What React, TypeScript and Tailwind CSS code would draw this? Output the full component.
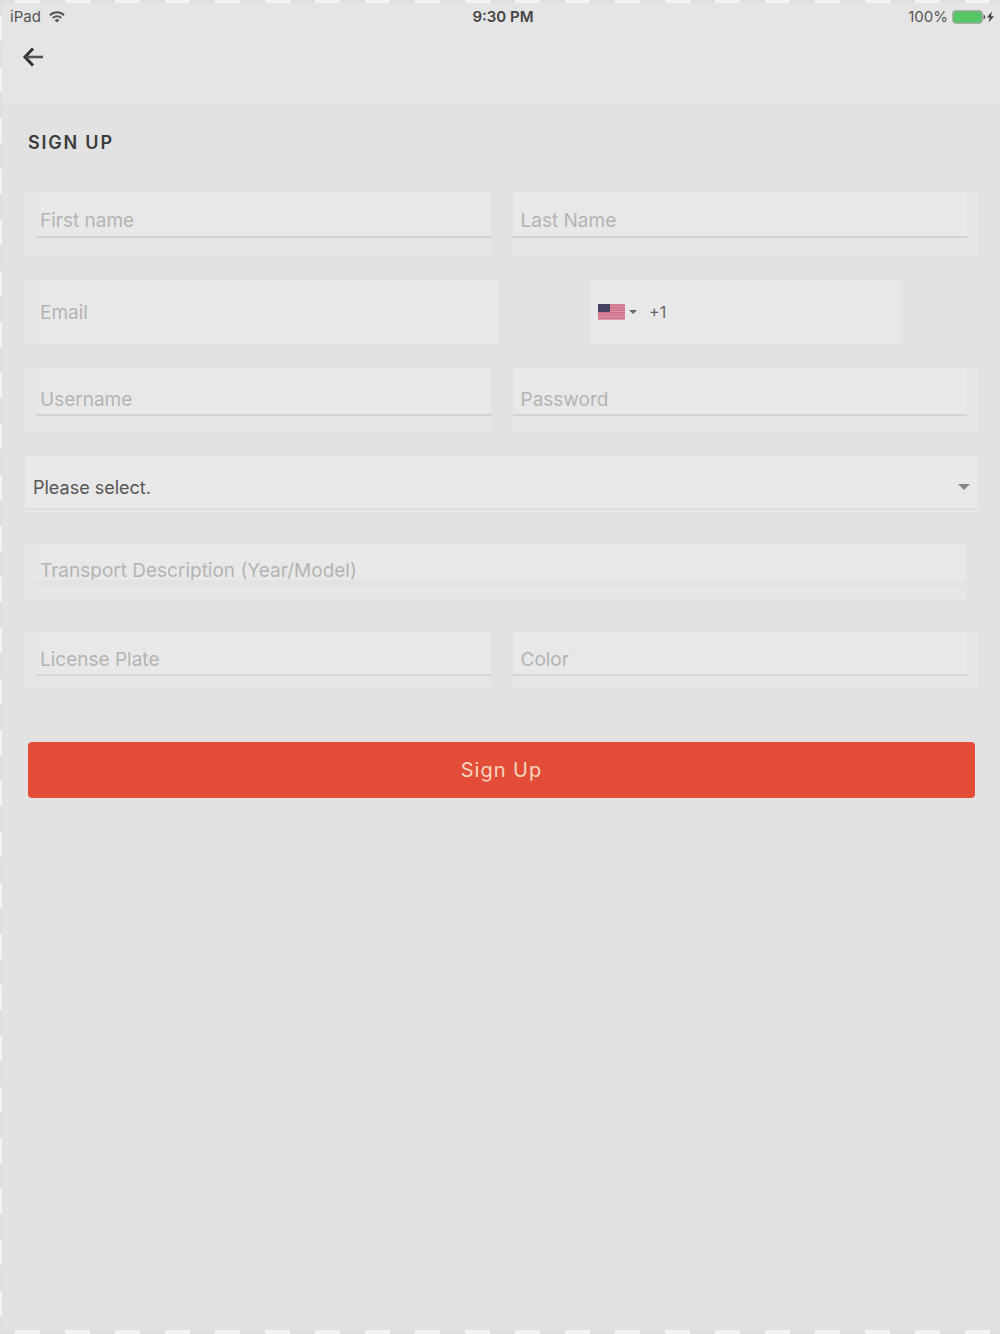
import { useState } from "react";
import clsx from "clsx";

type FieldProps = {
  label: string;
  type?: string;
  className?: string;
  inputClassName?: string;
};

function Field({ label, type = "text", className, inputClassName }: FieldProps) {
  return (
    <div className={clsx("bg-[#e6e6e6]", className)}>
      <input
        type={type}
        aria-label={label}
        placeholder={label}
        className={clsx(
          "block w-full rounded-none bg-[#e8e8e8] text-[19px] text-[#555] outline-none placeholder:text-[#b4b4b4]",
          inputClassName
        )}
      />
    </div>
  );
}

function StatusBar() {
  return (
    <div className="grid h-7 grid-cols-3 items-center pl-2 pr-1 text-[15px] leading-5 text-[#555]">
      <div className="flex items-center gap-2">
        <span>iPad</span>
        <svg width="16" height="12" viewBox="0 0 16 12" fill="none" stroke="#555" strokeWidth="2">
          <path d="M1 4.2a10 10 0 0 1 14 0" />
          <path d="M3.8 7a6 6 0 0 1 8.4 0" />
          <path d="M8 11.5 5.7 9.2a3.3 3.3 0 0 1 4.6 0z" fill="#555" stroke="none" />
        </svg>
      </div>
      <span className="text-center font-semibold text-[#444]">9:30 PM</span>
      <div className="flex items-center justify-end gap-1">
        <span>100%</span>
        <svg width="44" height="14" viewBox="0 0 44 14">
          <rect x="1" y="1" width="29" height="12" rx="3" fill="#57c667" stroke="#8fa893" strokeWidth="1.5" />
          <path d="M31.5 4.500v5a2.600 2.600 0 0 0 0-5z" fill="#555" />
          <path d="M40 1.500 34.800 7.600h3L36.600 12.500 42 6.200h-3z" fill="#444" />
        </svg>
      </div>
    </div>
  );
}

function UsFlag() {
  return (
    <svg width="27" height="16" viewBox="0 0 27 16" className="shrink-0">
      <rect width="27" height="16" fill="#d99aaa" />
      <path d="M0 1.200h27M0 3.700h27M0 6.200h27M0 8.700h27M0 11.200h27M0 13.700h27" stroke="#d2708a" strokeWidth="1.4" />
      <rect width="12" height="8" fill="#45425f" />
    </svg>
  );
}

function Caret({ className }: { className?: string }) {
  return (
    <svg viewBox="0 0 12 6" className={className} fill="currentColor">
      <path d="M0 0h12L6 6z" />
    </svg>
  );
}

export default function App() {
  const [phone, setPhone] = useState("+1");

  return (
    <div className="flex min-h-screen flex-col bg-[conic-gradient(#f3f3f3_25%,#dfdfdf_0_50%,#f3f3f3_0_75%,#dfdfdf_0)] bg-[length:50px_51px] bg-[position:15px_16px] pt-[3px] pb-1 pl-[2px] font-[Inter,'Liberation_Sans',sans-serif]">
      <div className="flex grow flex-col bg-[#e2e2e2]">
        <header className="h-[100px] bg-[#e5e5e5]">
          <StatusBar />
          <button type="button" aria-label="Back" className="ml-5 mt-4 block">
            <svg width="22" height="20" viewBox="0 0 22 20" fill="none" stroke="#333">
              <path d="M11 1.500 3 10l8 8.500" strokeWidth="3" />
              <path d="M4 10h17" strokeWidth="2.600" stroke="#555" />
            </svg>
          </button>
        </header>

        <main className="pl-[23px] pr-[22px] pt-6">
          <h1 className="pl-[3px] text-lg leading-8 font-semibold tracking-widest text-[#3c3c3c]">SIGN UP</h1>

          <form className="mt-[33px]" onSubmit={(e) => e.preventDefault()}>
            <div className="grid grid-cols-2 gap-x-[22px] gap-y-6">
              <Field
                label="First name"
                className="h-16 pl-[11px]"
                inputClassName="h-[46px] border-b-2 border-[#d2d2d2] px-1 pt-3"
              />
              <Field
                label="Last Name"
                className="h-16 pr-[11px]"
                inputClassName="h-[46px] border-b-2 border-[#d2d2d2] px-2 pt-3"
              />

              <Field
                label="Email"
                type="email"
                className="-mr-2 h-16 pl-[11px]"
                inputClassName="h-16 px-1"
              />
              <div className="flex justify-center">
                <div className="flex h-16 w-2/3 items-center bg-[#e8e8e8] pl-2">
                  <button type="button" aria-label="Country" className="flex items-center gap-1">
                    <UsFlag />
                    <Caret className="w-2 text-[#666]" />
                  </button>
                  <input
                    type="tel"
                    aria-label="Phone"
                    value={phone}
                    onChange={(e) => setPhone(e.target.value)}
                    className="ml-3 w-full min-w-0 bg-transparent text-base text-[#666] outline-none"
                  />
                </div>
              </div>

              <Field
                label="Username"
                className="h-16 pl-[11px]"
                inputClassName="h-12 border-b-2 border-[#d2d2d2] px-1 pt-4"
              />
              <Field
                label="Password"
                type="password"
                className="h-16 pr-[11px]"
                inputClassName="h-12 border-b-2 border-[#d2d2d2] px-2 pt-4"
              />
            </div>

            <div className="relative mt-6 h-14 border-b-2 border-[#e8e8e8] bg-[#e8e8e8]">
              <select
                aria-label="Transport type"
                className="block h-[54px] w-full appearance-none border-b-2 border-[#dcdcdc] bg-transparent pl-2 pt-3 text-lg text-[#555] outline-none"
              >
                <option>Please select.</option>
              </select>
              <Caret className="pointer-events-none absolute right-2 top-7 w-3 text-[#858585]" />
            </div>

            <Field
              label="Transport Description (Year/Model)"
              className="mr-3 mt-8 h-14 pl-[11px]"
              inputClassName="h-11 border-b-8 border-[#e3e3e3] px-1 pt-4"
            />

            <div className="mt-8 grid grid-cols-2 gap-x-[22px]">
              <Field
                label="License Plate"
                className="h-14 pl-[11px]"
                inputClassName="h-11 border-b-2 border-[#d6d6d6] px-1 pt-3"
              />
              <Field
                label="Color"
                className="h-14 pr-[11px]"
                inputClassName="h-11 border-b-2 border-[#d6d6d6] px-2 pt-3"
              />
            </div>

            <div className="mt-[54px] px-[3px]">
              <button
                type="submit"
                className="block h-14 w-full rounded-sm bg-[#e34d38] text-xl tracking-wider text-[#f6d5c0]"
              >
                Sign Up
              </button>
            </div>
          </form>
        </main>
      </div>
    </div>
  );
}
